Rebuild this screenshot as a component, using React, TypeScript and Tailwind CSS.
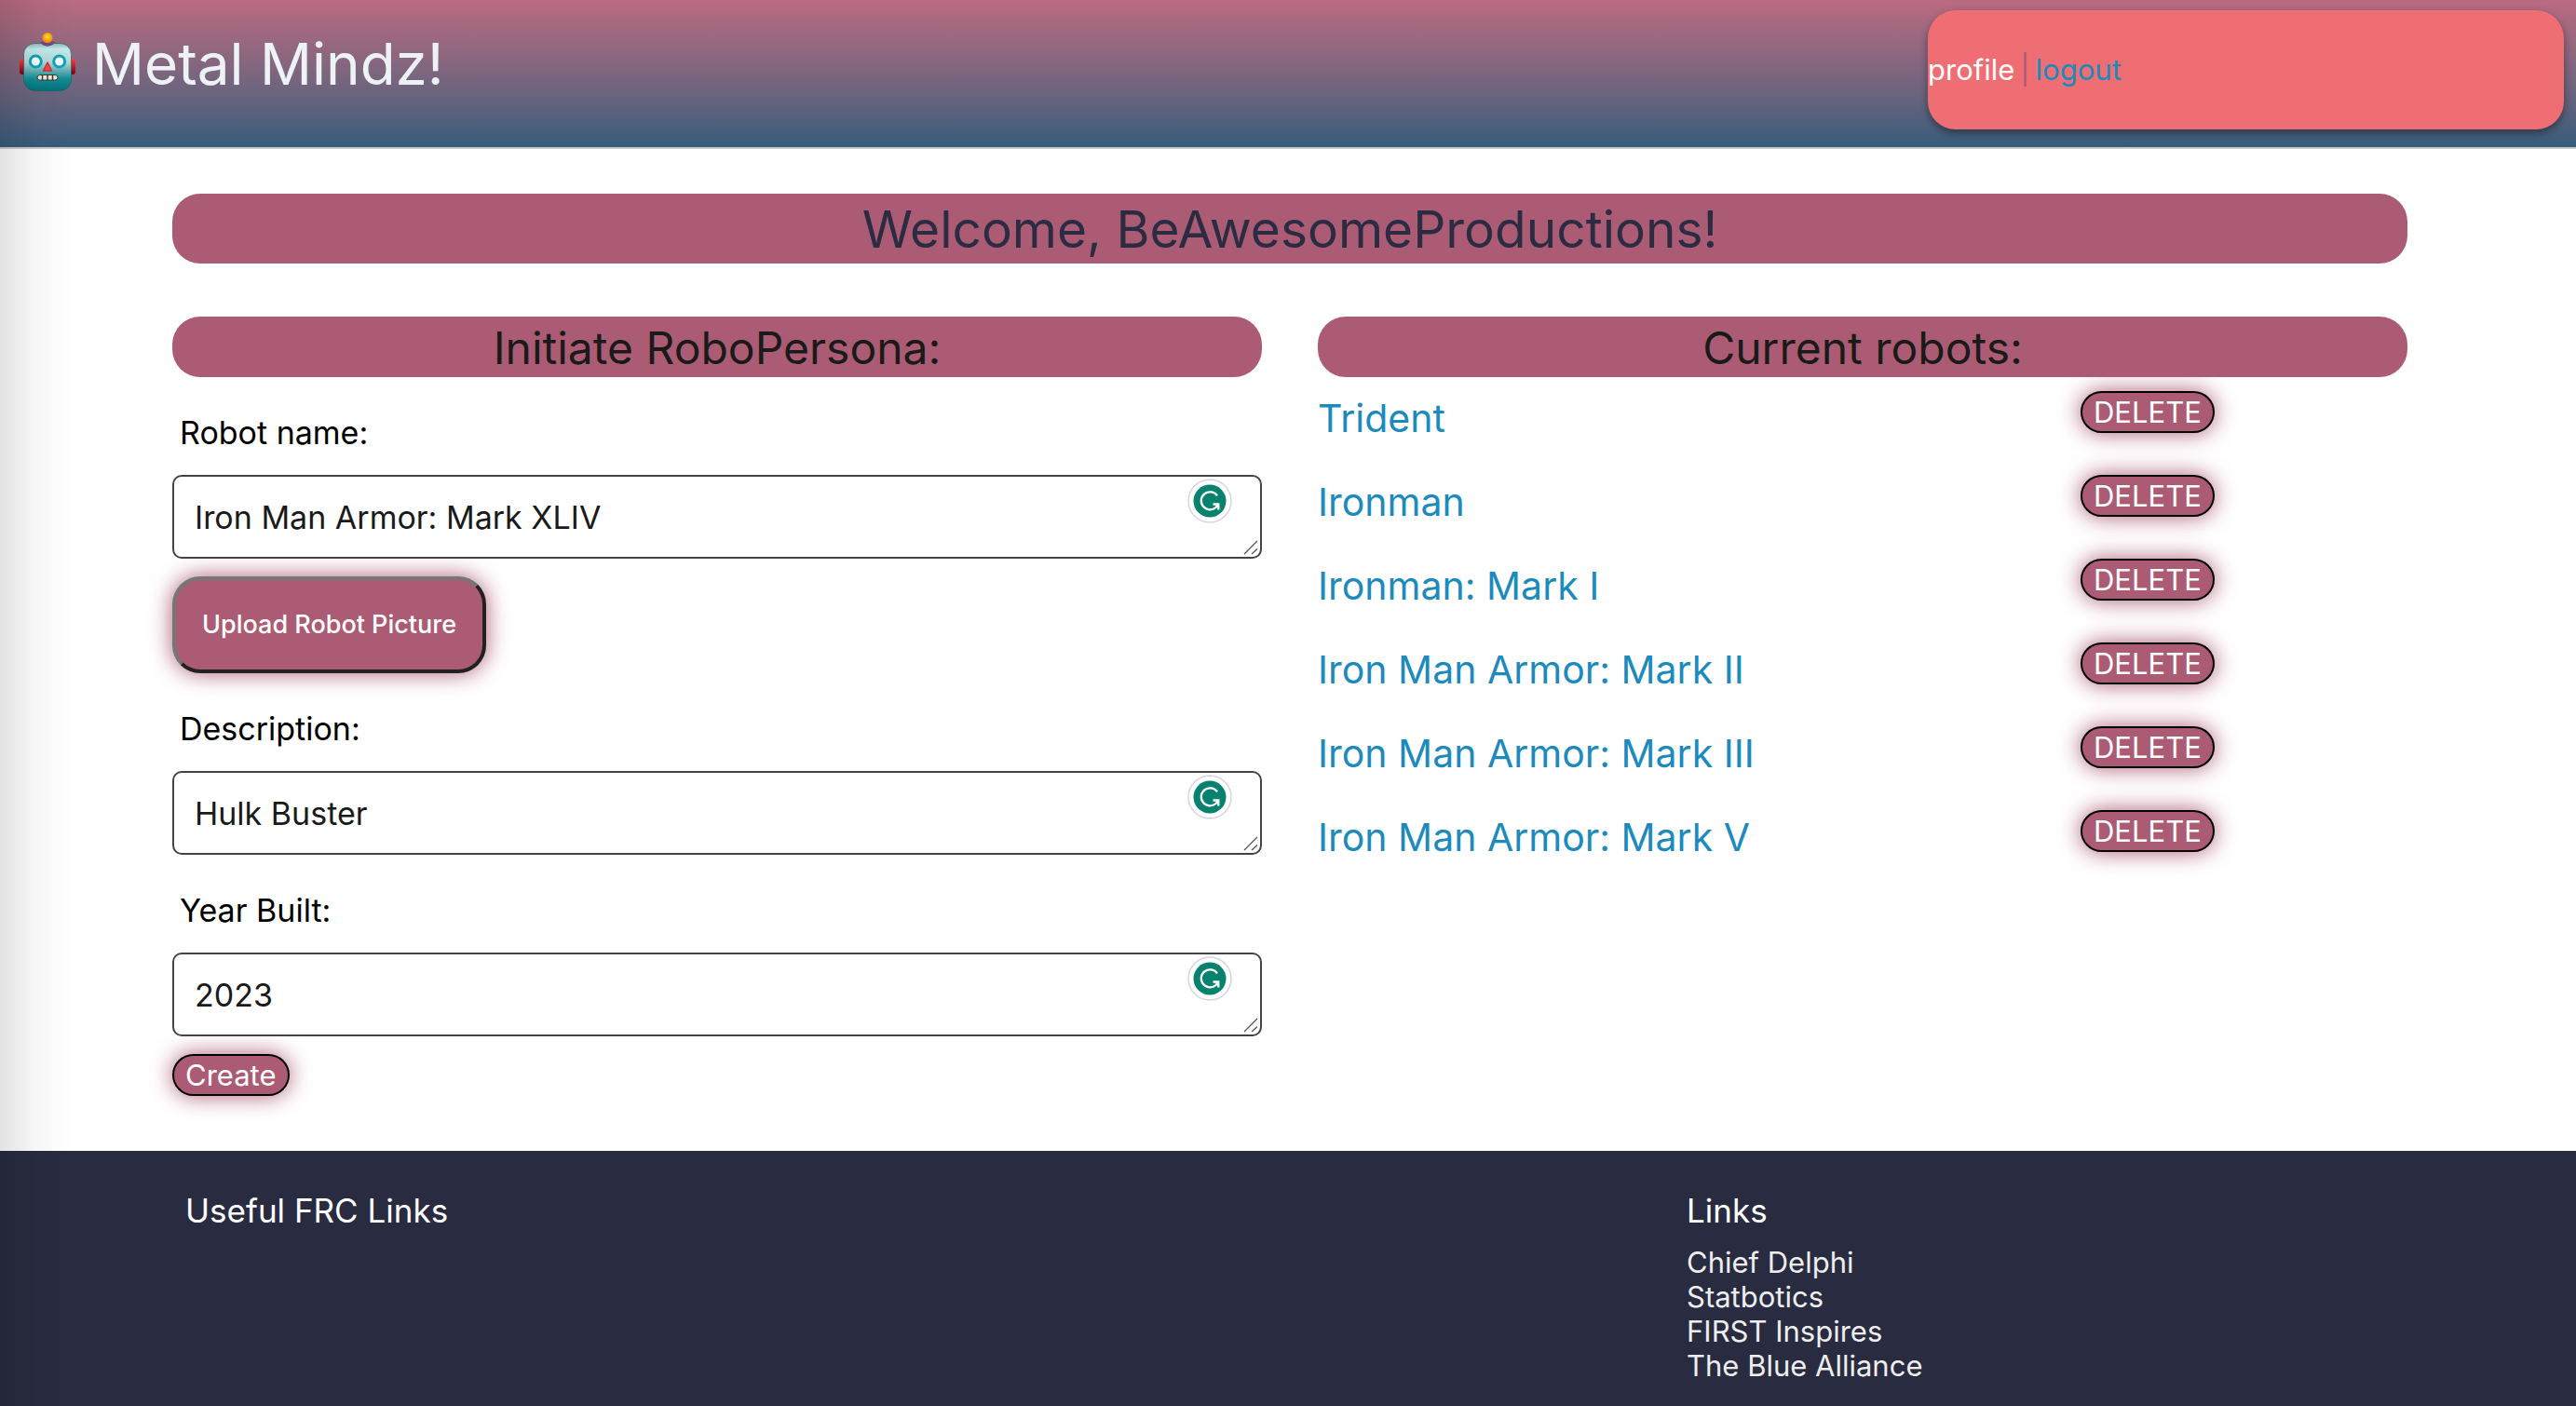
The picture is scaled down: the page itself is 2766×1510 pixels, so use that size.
import React from "react";

const robots = [
  "Trident",
  "Ironman",
  "Ironman: Mark I",
  "Iron Man Armor: Mark II",
  "Iron Man Armor: Mark III",
  "Iron Man Armor: Mark V",
];

const links = ["Chief Delphi", "Statbotics", "FIRST Inspires", "The Blue Alliance"];

function RobotLogo() {
  return (
    <svg viewBox="0 0 60 64" className="h-16 w-[60px] shrink-0" aria-hidden="true">
      <defs>
        <linearGradient id="head" x1="0" y1="0" x2="0" y2="1">
          <stop offset="0" stopColor="#8fb3b3" />
          <stop offset="0.12" stopColor="#c3eaec" />
          <stop offset="0.4" stopColor="#b4d6d6" />
          <stop offset="0.75" stopColor="#128c96" />
          <stop offset="1" stopColor="#04707a" />
        </linearGradient>
        <radialGradient id="bulb" cx="0.5" cy="0.4" r="0.6">
          <stop offset="0" stopColor="#ffe62e" />
          <stop offset="1" stopColor="#f57c00" />
        </radialGradient>
        <linearGradient id="ear" x1="0" y1="0" x2="0" y2="1">
          <stop offset="0" stopColor="#ff3b40" />
          <stop offset="1" stopColor="#7c0010" />
        </linearGradient>
      </defs>
      <rect x="0" y="28" width="8" height="17" rx="3" fill="url(#ear)" />
      <rect x="52" y="28" width="8" height="17" rx="3" fill="url(#ear)" />
      <rect x="4.5" y="11.5" width="51" height="51" rx="12" fill="url(#head)" stroke="#0d5f66" strokeOpacity="0.6" />
      <path d="M22 10.500C26 8 34 8 38 10.500C35 16 25 16 22 10.500z" fill="#6b4a86" />
      <circle cx="30" cy="5.700" r="5.600" fill="url(#bulb)" />
      <circle cx="17.300" cy="31" r="6" fill="#f6fbfc" stroke="#0da3bd" strokeWidth="3" />
      <circle cx="42.700" cy="31" r="6" fill="#f6fbfc" stroke="#0da3bd" strokeWidth="3" />
      <path d="M30 32l4.500 9H25.500z" fill="#f4464a" stroke="#d2303a" strokeWidth="1.500" strokeLinejoin="round" />
      <rect x="19" y="45.500" width="22" height="5.500" rx="2.750" fill="#f0ead8" stroke="#3a3a36" strokeWidth="1" />
      <path d="M24.500 45.500v5.500M30 45.500v5.500M35.500 45.500v5.500" stroke="#3a3a36" strokeWidth="1.500" />
    </svg>
  );
}

function GrammarBadge() {
  return (
    <svg viewBox="0 0 48 48" className="absolute top-1 right-8 size-12" aria-hidden="true">
      <circle cx="24" cy="24" r="23" fill="#fff" stroke="#d3d6e4" strokeWidth="1.500" />
      <circle cx="24" cy="24" r="17.500" fill="#07826f" />
      <path
        d="M32 18.300A9.500 9.500 0 1 0 30.500 31L33.200 27.800M27.500 27.500H33.300V33.500"
        fill="none"
        stroke="#fff"
        strokeWidth="2.300"
      />
    </svg>
  );
}

function ResizeGrip() {
  return (
    <svg viewBox="0 0 16 16" className="pointer-events-none absolute right-1 bottom-1 size-4" aria-hidden="true">
      <path d="M1 15L15 1M9 15L15 9.500" stroke="#555" strokeWidth="1.300" />
    </svg>
  );
}

function Field({ id, label, value }: { id: string; label: string; value: string }) {
  return (
    <div>
      <label htmlFor={id} className="block px-2 pt-[33px] pb-[19px] text-[34px] leading-[53px] text-black">
        {label}
      </label>
      <div className="relative">
        <textarea
          id={id}
          rows={1}
          defaultValue={value}
          className="block h-[90px] w-full resize-none overflow-hidden rounded-[10px] border-2 border-[#444] bg-white px-[22px] py-5 text-[34px] leading-[48px] text-[#1a1a1a]"
        />
        <GrammarBadge />
        <ResizeGrip />
      </div>
    </div>
  );
}

function PillButton({ children }: { children: string }) {
  return (
    <button
      type="button"
      className="block h-[45px] rounded-full border-2 border-black bg-[#ab5c74] px-3 text-[31px] leading-[41px] text-white shadow-[0_0_24px_#ab5c74]"
    >
      {children}
    </button>
  );
}

function ColumnHeading({ children }: { children: string }) {
  return (
    <h2 className="rounded-[30px] bg-[#ab5c74] pt-0.5 text-center text-[48px] leading-[63px] text-[#1a1a1a]">
      {children}
    </h2>
  );
}

export default function App() {
  return (
    <div className="relative flex min-h-screen flex-col bg-white font-['Inter',sans-serif]">
      <header className="flex items-start justify-between border-b-2 border-[#ccc] bg-linear-to-b from-[#ba6a80] to-[#355c7b] pr-[13px] pb-[19px] pl-[21px]">
        <h1 className="flex items-center gap-[18px] pt-[33px] text-[62px] leading-16 text-[#ecf2f6]">
          <RobotLogo />
          <span className="pt-1">Metal Mindz!</span>
        </h1>
        <nav className="mt-[11px] flex h-32 w-1/4 items-center gap-1.5 rounded-[30px] bg-[#ee6e73] text-[31px] text-[#ab5c74] shadow-[0_4px_8px_rgba(0,0,0,0.4)]">
          <a href="#profile" className="text-white">profile</a>
          <span>|</span>
          <a href="#logout" className="text-[#1c8abc]">logout</a>
        </nav>
      </header>

      <main className="w-full flex-1 pt-12 pl-1">
        <div className="mx-auto max-w-[2400px]">
          <h1 className="rounded-[30px] bg-[#ab5c74] pt-0.5 text-center text-[55px] leading-[73px] text-[#2b2c42]">
            Welcome, BeAwesomeProductions!
          </h1>
          <div className="mt-[57px] grid grid-cols-2 gap-[60px]">
            <section>
              <ColumnHeading>Initiate RoboPersona:</ColumnHeading>
              <form className="flex flex-col">
                <Field id="robot-name" label="Robot name:" value="Iron Man Armor: Mark XLIV" />
                <button
                  type="button"
                  className="mt-[19px] h-[104px] self-start rounded-[30px] border-4 border-t-[#767676] border-r-[#212121] border-b-[#212121] border-l-[#767676] bg-[#ab5c74] px-7 text-[27px] font-medium text-white shadow-[0_0_24px_#ab5c74]"
                >
                  Upload Robot Picture
                </button>
                <Field id="description" label="Description:" value="Hulk Buster" />
                <Field id="year-built" label="Year Built:" value="2023" />
                <div className="mt-[19px] mb-[59px] self-start">
                  <PillButton>Create</PillButton>
                </div>
              </form>
            </section>
            <section>
              <ColumnHeading>Current robots:</ColumnHeading>
              <ul>
                {robots.map((name) => (
                  <li key={name} className="grid h-[90px] grid-cols-[7fr_3fr] items-start pt-[15px]">
                    <a href="#robot" className="text-[41px] leading-[59px] text-[#1c8abc]">{name}</a>
                    <div className="flex">
                      <PillButton>DELETE</PillButton>
                    </div>
                  </li>
                ))}
              </ul>
            </section>
          </div>
        </div>
      </main>

      <footer className="bg-[#292b40] pt-10 pb-[25px] pl-1">
        <div className="mx-auto flex max-w-[2400px] text-white">
          <div className="w-[67.75%] pl-3.5">
            <h3 className="text-[35px] leading-[48px]">Useful FRC Links</h3>
          </div>
          <div>
            <h3 className="text-[35px] leading-[48px]">Links</h3>
            <ul className="mt-[13px] text-[31px] leading-[37px] text-[#eee]">
              {links.map((name) => (
                <li key={name}>
                  <a href="#link">{name}</a>
                </li>
              ))}
            </ul>
          </div>
        </div>
      </footer>

      <div className="pointer-events-none absolute inset-y-0 left-0 w-20 bg-linear-to-r from-black/11 via-black/3 to-transparent" />
    </div>
  );
}
